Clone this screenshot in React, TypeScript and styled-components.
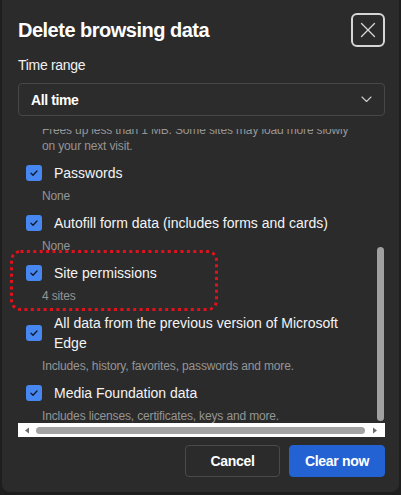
import React from "react";
import styled, { createGlobalStyle } from "styled-components";

const GlobalStyle = createGlobalStyle`
  html, body { margin: 0; padding: 0; background: #1e1e1e; }
  body { font-family: "Liberation Sans", Arial, sans-serif; overflow: hidden; }
  * { box-sizing: border-box; }
`;

const Page = styled.div`
  width: 401px;
  height: 495px;
  display: flex;
  padding-left: 2px;
  overflow: hidden;
`;

const Dialog = styled.div`
  width: 397px;
  height: 492px;
  background: #2b2b2b;
  border-radius: 0 0 8px 8px;
  padding: 13px 14px 15px 16px;
  display: flex;
  flex-direction: column;
`;

const Header = styled.div`
  height: 34px;
  display: flex;
  align-items: center;
  justify-content: space-between;
`;

const Title = styled.h1`
  margin: 0;
  font-size: 20px;
  font-weight: 700;
  letter-spacing: -0.5px;
  color: #ffffff;
  line-height: 28px;
`;

const CloseButton = styled.button`
  width: 34px;
  height: 34px;
  border: 2px solid #d6d6d6;
  border-radius: 6px;
  background: transparent;
  display: grid;
  place-items: center;
  padding: 0;
`;

const FieldLabel = styled.div`
  margin-top: 8px;
  font-size: 14px;
  line-height: 20px;
  letter-spacing: -0.3px;
  color: #f2f2f2;
`;

const Select = styled.div`
  margin-top: 8px;
  height: 33px;
  border: 1px solid #474747;
  border-radius: 4px;
  background: #2c2c2c;
  display: flex;
  align-items: center;
  justify-content: space-between;
  padding: 0 12px;
`;

const SelectValue = styled.span`
  font-size: 14px;
  font-weight: 700;
  letter-spacing: -0.4px;
  color: #ffffff;
`;

const ScrollArea = styled.div`
  margin-top: 13px;
  height: 294px;
  position: relative;
  clip-path: inset(0 -20px 0 -20px);
`;

const ScrollContent = styled.div<{ $offset: number }>`
  margin-top: ${(p) => p.$offset}px;
  display: flex;
  flex-direction: column;
  gap: 9px;
`;

const Item = styled.div`
  position: relative;
`;

const Row = styled.div`
  display: flex;
  align-items: center;
  gap: 12px;
  padding-left: 8px;
`;

const Box = styled.span`
  width: 16px;
  height: 16px;
  flex: none;
  border-radius: 3px;
  background: #4687f2;
  display: grid;
  place-items: center;
`;

const Label = styled.span`
  font-size: 14px;
  line-height: 20px;
  color: #f4f4f4;
  max-width: 300px;
`;

const Sub = styled.div<{ $flush?: boolean }>`
  margin-top: ${(p) => (p.$flush ? 0 : 5)}px;
  padding-left: 24px;
  font-size: 12px;
  line-height: 16px;
  letter-spacing: -0.15px;
  color: #959595;
  white-space: pre-line;
`;

const Highlight = styled.svg`
  position: absolute;
  left: -8px;
  top: -13px;
  width: 208px;
  height: 61px;
  pointer-events: none;
`;

const VThumb = styled.div`
  position: absolute;
  right: 1px;
  top: 118px;
  bottom: 2px;
  width: 7px;
  border-radius: 4px;
  background: #a0a0a0;
`;

const HScrollbar = styled.div`
  height: 14px;
  background: #ffffff;
  display: grid;
  grid-template-columns: 18px 1fr 20px;
  align-items: center;
  justify-items: center;
`;

const HThumb = styled.div`
  justify-self: stretch;
  height: 7px;
  border-radius: 4px;
  background: #a3a3a3;
`;

const Footer = styled.div`
  margin-top: 8px;
  display: flex;
  justify-content: flex-end;
  gap: 9px;
`;

const Button = styled.button<{ $primary?: boolean; $w: number }>`
  width: ${(p) => p.$w}px;
  height: 32px;
  border-radius: 4px;
  border: 1px solid ${(p) => (p.$primary ? "#2362d3" : "#4a4a4a")};
  background: ${(p) => (p.$primary ? "#2362d3" : "#2b2b2b")};
  color: #ffffff;
  font-family: "Liberation Sans", Arial, sans-serif;
  font-size: 14px;
  font-weight: 700;
  letter-spacing: -0.3px;
  padding: 0;
`;

const Check = () => (
  <svg width="16" height="16" viewBox="0 0 16 16">
    <path d="M5 8.3 L7 10.2 L11 6" fill="none" stroke="#101828" strokeWidth="1.3" strokeLinecap="round" strokeLinejoin="round" />
  </svg>
);

type Entry = { label: string; sub: string; highlight?: boolean };

const entries: Entry[] = [
  { label: "Passwords", sub: "None" },
  { label: "Autofill form data (includes forms and cards)", sub: "None" },
  { label: "Site permissions", sub: "4 sites", highlight: true },
  {
    label: "All data from the previous version of Microsoft Edge",
    sub: "Includes, history, favorites, passwords and more.",
  },
  { label: "Media Foundation data", sub: "Includes licenses, certificates, keys and more." },
];

export default function App() {
  return (
    <>
      <GlobalStyle />
      <Page>
        <Dialog>
          <Header>
            <Title>Delete browsing data</Title>
            <CloseButton aria-label="Close">
              <svg width="16" height="16" viewBox="0 0 16 16">
                <path d="M1.5 1.5 L14.5 14.5 M14.5 1.5 L1.5 14.5" stroke="#d8d8d8" strokeWidth="1.3" strokeLinecap="round" />
              </svg>
            </CloseButton>
          </Header>
          <FieldLabel>Time range</FieldLabel>
          <Select>
            <SelectValue>All time</SelectValue>
            <svg width="11" height="7" viewBox="0 0 11 7">
              <path d="M1 1 L5.5 5.5 L10 1" fill="none" stroke="#cfcfcf" strokeWidth="1.1" strokeLinecap="round" strokeLinejoin="round" />
            </svg>
          </Select>
          <ScrollArea>
            <ScrollContent $offset={-7}>
              <Sub $flush>{"Frees up less than 1 MB. Some sites may load more slowly\non your next visit."}</Sub>
              {entries.map((e) => (
                <Item key={e.label}>
                  <Row>
                    <Box>
                      <Check />
                    </Box>
                    <Label>{e.label}</Label>
                  </Row>
                  <Sub>{e.sub}</Sub>
                  {e.highlight && (
                    <Highlight viewBox="0 0 208 61">
                      <rect x="1.5" y="1.5" width="205" height="58" rx="9" fill="none" stroke="#e3111b" strokeWidth="3" strokeDasharray="3 3.4" />
                    </Highlight>
                  )}
                </Item>
              ))}
            </ScrollContent>
            <VThumb />
          </ScrollArea>
          <HScrollbar>
            <svg width="6" height="7" viewBox="0 0 6 7">
              <path d="M5 0.5 L1 3.5 L5 6.5 Z" fill="#6a6a6a" />
            </svg>
            <HThumb />
            <svg width="6" height="7" viewBox="0 0 6 7">
              <path d="M1 0.5 L5 3.5 L1 6.5 Z" fill="#6a6a6a" />
            </svg>
          </HScrollbar>
          <Footer>
            <Button $w={95}>Cancel</Button>
            <Button $w={96} $primary>
              Clear now
            </Button>
          </Footer>
        </Dialog>
      </Page>
    </>
  );
}
